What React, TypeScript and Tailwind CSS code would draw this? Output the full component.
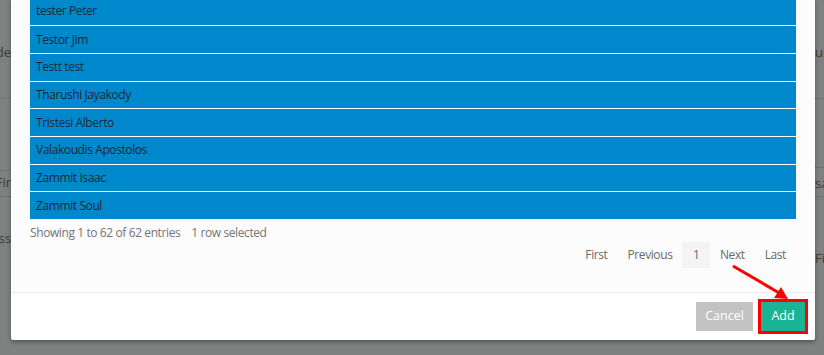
const names = [
  "tester Peter",
  "Testor Jim",
  "Testt test",
  "Tharushi Jayakody",
  "Tristesi Alberto",
  "Valakoudis Apostolos",
  "Zammit Isaac",
  "Zammit Soul",
];

// the page that sits behind the dimmed overlay, only its edges show
function PageBehind() {
  return (
    <div className="flex justify-between h-full text-[13px] leading-[18px] text-[#3b3b3b]">
      <div className="w-[11px] overflow-hidden flex flex-col items-end pt-[43px]">
        <div className="whitespace-nowrap">Name de</div>
        <div className="self-stretch mt-[37px] border-t border-dotted border-[#6a6a6a]" />
        <div className="self-stretch mt-[71px] border-t border-[#717171]" />
        <div className="whitespace-nowrap mt-[2px]">Fir</div>
        <div className="self-stretch mt-[5px] border-t border-[#717171]" />
        <div className="whitespace-nowrap mt-[32px]">ss</div>
      </div>
      <div className="w-[9px] overflow-hidden flex flex-col items-start pt-[43px]">
        <div className="whitespace-nowrap">ur</div>
        <div className="self-stretch mt-[37px] border-t border-dotted border-[#6a6a6a]" />
        <div className="self-stretch mt-[68px] border-t border-[#717171]" />
        <div className="whitespace-nowrap mt-[6px]">sa</div>
        <div className="self-stretch mt-[4px] border-t border-[#717171]" />
        <div className="whitespace-nowrap mt-[52px]">Fi</div>
      </div>
    </div>
  );
}

export default function App() {
  return (
    <div
      className="relative w-[824px] h-[355px] overflow-hidden bg-[#7f8080]"
      style={{ fontFamily: '"Open Sans", "Noto Sans", sans-serif' }}
    >
      <PageBehind />

      <div className="absolute left-[11px] w-[804px] bottom-[15px] bg-white shadow-[0_2px_4px_rgba(0,0,0,0.35)] rounded-b-[2px]">
        <div className="bg-[#fcfcfc] px-[19px] pb-[24px] border-b border-[#eeeeee] tracking-[-0.4px]">
          <div className="flex flex-col">
            {names.map((n, i) => (
              <div
                key={n}
                className={`h-[27.7px] flex items-center pl-[6px] bg-[#0088cc] text-[12px] text-[#1d2a36] ${
                  i > 0 ? "border-t border-white" : ""
                }`}
              >
                {n}
              </div>
            ))}
          </div>

          <div className="mt-[6px] text-[12px] text-[#737578] leading-[16px]">
            Showing 1 to 62 of 62 entries
            <span className="ml-[11px]">1 row selected</span>
          </div>

          <div className="flex justify-end mt-[1px] text-[12px] text-[#676a6c]">
            <div className="flex items-center h-[26px]">
              <span className="px-[10px]">First</span>
              <span className="px-[10px]">Previous</span>
              <span className="h-full flex items-center px-[10.5px] bg-[#f4f4f4]">1</span>
              <span className="px-[10px]">Next</span>
              <span className="px-[10px]">Last</span>
            </div>
          </div>
        </div>

        <div className="flex justify-end items-center gap-[5px] h-[47px] pr-[7px]">
          <button className="h-[29px] w-[57px] bg-[#c2c2c2] text-white text-[12.5px]">Cancel</button>
          <div className="border-[3px] border-[#ff0000]">
            <button className="h-[29px] w-[44px] bg-[#1ab394] text-white text-[12.5px] block">Add</button>
          </div>
        </div>
      </div>

      <svg className="absolute left-0 top-0" width="824" height="355" viewBox="0 0 824 355">
        <line x1="733" y1="266" x2="781" y2="294" stroke="#ff0000" strokeWidth="3" />
        <polygon points="788,299 774,298 781,287" fill="#ff0000" />
      </svg>
    </div>
  );
}
